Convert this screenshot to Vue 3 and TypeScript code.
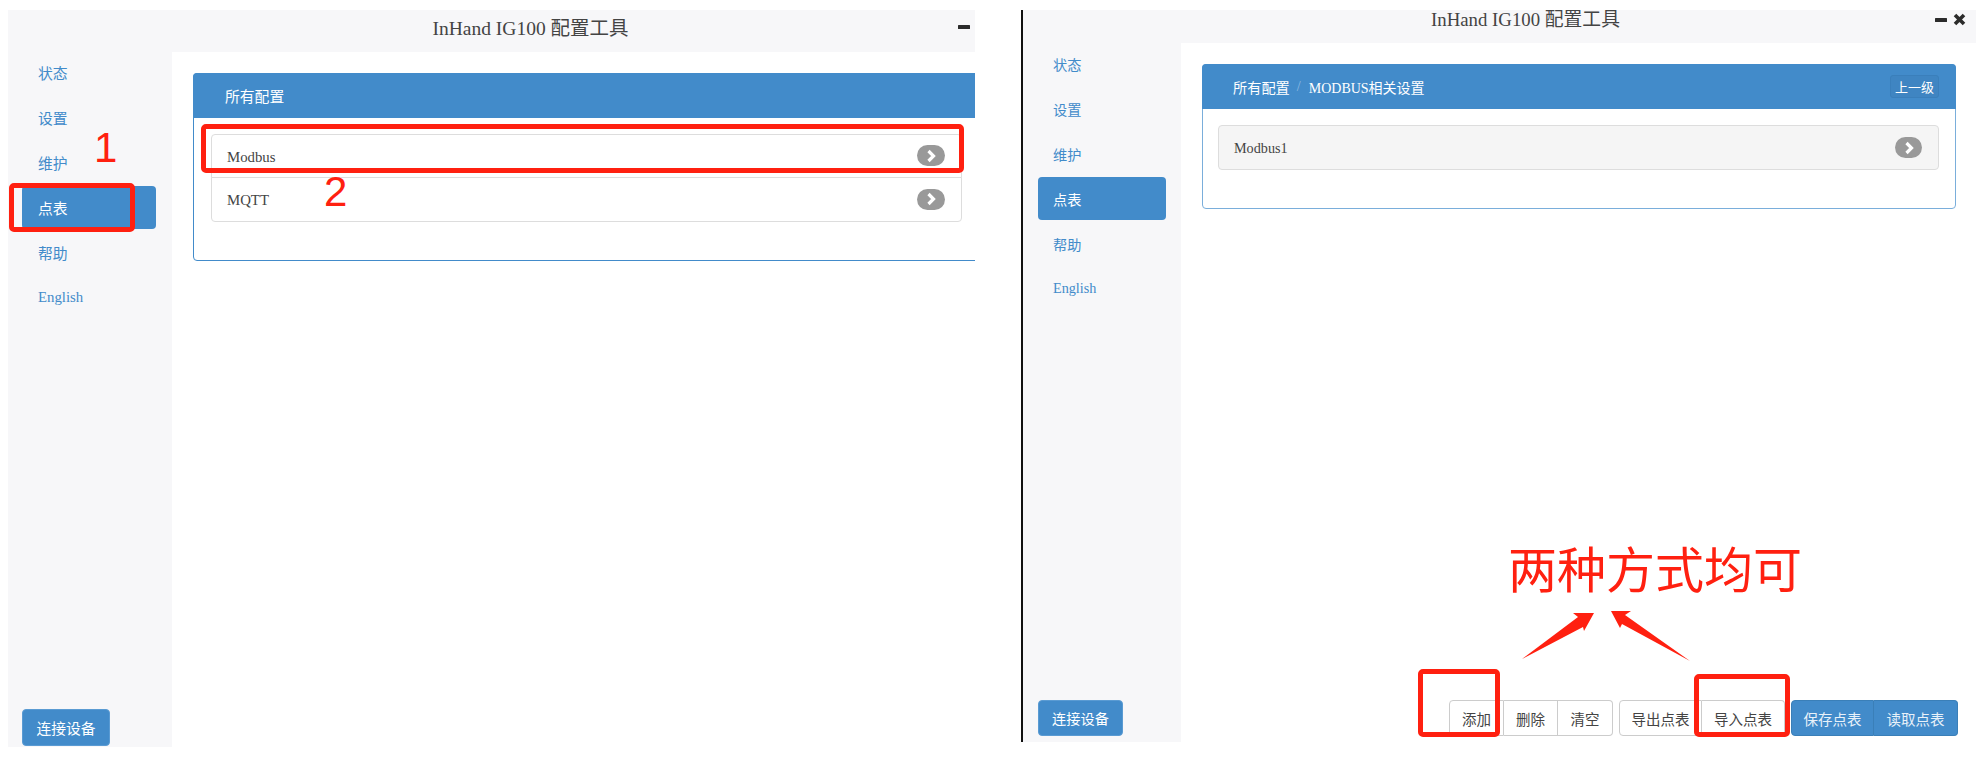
<script setup lang="ts">
interface Nav { label: string; active?: boolean }
const navs: Nav[] = [
  { label: '状态' },
  { label: '设置' },
  { label: '维护' },
  { label: '点表', active: true },
  { label: '帮助' },
  { label: 'English' },
]
const leftItems = ['Modbus', 'MQTT']
</script>

<template>
  <div class="page">
    <section class="win win-left">
      <header class="titlebar">
        <h1 class="title">InHand IG100 配置工具</h1>
        <div class="controls">
          <svg class="ctl-min" width="12" height="4" viewBox="0 0 12 4"><rect width="12" height="4" rx="0.5" fill="#2b2b2b" /></svg>
        </div>
      </header>
      <div class="body">
        <aside class="side">
          <nav class="nav">
            <a v-for="n in navs" :key="n.label" class="nav-item" :class="{ active: n.active }">{{ n.label }}</a>
          </nav>
          <button class="connect">连接设备</button>
        </aside>
        <main class="main">
          <div class="panel">
            <div class="panel-head"><span>所有配置</span></div>
            <div class="panel-body">
              <div class="list">
                <div v-for="t in leftItems" :key="t" class="list-item">
                  <span>{{ t }}</span>
                  <span class="badge">
                    <svg width="12" height="14" viewBox="0 0 12 14"><path d="M3.5 2 8.5 7 3.5 12" fill="none" stroke="#fff" stroke-width="3.2" /></svg>
                  </span>
                </div>
              </div>
            </div>
          </div>
        </main>
      </div>
    </section>

    <section class="win win-right">
      <header class="titlebar">
        <h1 class="title">InHand IG100 配置工具</h1>
        <div class="controls">
          <svg class="ctl-min" width="12" height="4" viewBox="0 0 12 4"><rect width="12" height="4" rx="0.5" fill="#2b2b2b" /></svg>
          <svg class="ctl-x" width="13" height="13" viewBox="0 0 13 13"><path d="M2 2 11 11M11 2 2 11" stroke="#2b2b2b" stroke-width="3.6" /></svg>
        </div>
      </header>
      <div class="body">
        <aside class="side">
          <nav class="nav">
            <a v-for="n in navs" :key="n.label" class="nav-item" :class="{ active: n.active }">{{ n.label }}</a>
          </nav>
          <button class="connect">连接设备</button>
        </aside>
        <main class="main">
          <div class="panel">
            <div class="panel-head">
              <span>所有配置</span><span class="sep">/</span><span class="crumb">MODBUS相关设置</span>
              <button class="up">上一级</button>
            </div>
            <div class="panel-body">
              <div class="list">
                <div class="list-item hover">
                  <span>Modbus1</span>
                  <span class="badge">
                    <svg width="12" height="14" viewBox="0 0 12 14"><path d="M3.5 2 8.5 7 3.5 12" fill="none" stroke="#fff" stroke-width="3.2" /></svg>
                  </span>
                </div>
              </div>
            </div>
          </div>
          <div class="footer">
            <div class="group">
              <button class="btn w55">添加</button><button class="btn w54">删除</button><button class="btn w55">清空</button>
            </div>
            <div class="group">
              <button class="btn w83">导出点表</button><button class="btn w83">导入点表</button>
            </div>
            <div class="group blue">
              <button class="btn w83">保存点表</button><button class="btn w84">读取点表</button>
            </div>
          </div>
        </main>
      </div>
    </section>

    <div class="mark m1"></div>
    <div class="mark m2"></div>
    <div class="mark m3"></div>
    <div class="mark m4"></div>
    <span class="num n1">1</span>
    <span class="num n2">2</span>
    <span class="note">两种方式均可</span>
    <svg class="arrows" width="1980" height="759" viewBox="0 0 1980 759">
      <polygon points="1522,659 1578,617 1573,613 1594,613 1584,631 1583,627" fill="#ff2010" />
      <polygon points="1690,661 1625,615 1631,611 1611,611 1620,628 1622,624" fill="#ff2010" />
    </svg>
  </div>
</template>

<style>
html, body { margin: 0; background: #fff; }
</style>

<style scoped>
.page {
  position: relative;
  width: 1980px;
  height: 759px;
  overflow: hidden;
  display: flex;
  align-items: flex-start;
  padding: 10px 0 0 8px;
  box-sizing: border-box;
  font-family: "Liberation Serif", "Noto Sans CJK SC", serif;
  color: #444;
}
.win { display: flex; flex-direction: column; background: #f7f7f9; flex: none; }
.win-left { width: 967px; height: 737px; font-size: 14.8px; }
.win-right { width: 953px; height: 732px; margin-left: 46px; border-left: 2px solid #111; font-size: 14.2px; }

.titlebar { display: flex; align-items: center; justify-content: center; position: relative; flex: none; }
.win-left .titlebar { height: 42px; padding: 0 0 4px 78px; box-sizing: border-box; }
.win-right .titlebar { height: 33px; padding: 0 0 14px 52px; box-sizing: border-box; }
.title { margin: 0; font-weight: 400; color: #444; line-height: 22px; }
.win-left .title { font-size: 19.5px; }
.win-right .title { font-size: 18.8px; }
.controls { position: absolute; display: flex; align-items: center; gap: 6px; }
.win-left .controls { right: 5px; top: 15px; }
.win-right .controls { right: 10px; top: 3px; }

.body { flex: 1; display: flex; min-height: 0; }
.side { flex: none; display: flex; flex-direction: column; justify-content: space-between; box-sizing: border-box; }
.win-left .side { width: 164px; padding: 0 16px 1px 14px; }
.win-right .side { width: 158px; padding: 0 15px 6px 15px; }
.nav { display: flex; flex-direction: column; gap: 2px; margin-top: -1px; }
.nav-item {
  height: 43px;
  display: flex;
  align-items: center;
  padding-left: 16px;
  border-radius: 4px;
  color: #428bca;
  box-sizing: border-box;
}
.win-right .nav-item { padding-left: 15px; }
.nav-item.active { background: #428bca; color: #fff; }
.connect {
  align-self: flex-start;
  background: #428bca;
  color: #fff;
  border: 1px solid #5a9bd3;
  border-radius: 4px;
  font: inherit;
  height: 37px;
  padding: 0;
}
.win-left .connect { width: 88px; }
.win-right .connect { width: 85px; height: 36px; }

.main { flex: 1; background: #fff; min-width: 0; overflow: hidden; display: flex; flex-direction: column; }
.win-left .main { padding: 21px 0 0 21px; }
.win-right .main { padding: 21px 20px 6px 21px; }
.panel { border: 1px solid #428bca; border-radius: 4px; background: #fff; flex: none; }
.win-left .panel { width: 820px; }
.win-right .panel { border-color: #7aaedb; }
.panel-head {
  background: #428bca;
  color: #fff;
  height: 45px;
  box-sizing: border-box;
  margin: -1px -1px 0;
  border-radius: 4px 4px 0 0;
  padding-left: 32px;
  display: flex;
  align-items: center;
}
.win-right .panel-head { padding-left: 31px; padding-right: 17px; }
.sep { color: #8fbce3; margin: 0 8px 0 7px; }
.crumb { font-size: 14px; }
.up {
  margin-left: auto;
  width: 49px;
  height: 23px;
  padding: 0;
  background: #3f85c2;
  color: #fff;
  border: 1px solid #3a7fbb;
  border-radius: 3px;
  font: inherit;
  font-size: 13px;
}
.panel-body { padding: 16px 0 38px 17px; }
.win-left .panel-body { padding-right: 52px; }
.win-right .panel-body { padding: 16px 16px 38px 15px; }
.list { display: flex; flex-direction: column; }
.list-item {
  height: 44px;
  display: flex;
  align-items: center;
  justify-content: space-between;
  box-sizing: border-box;
  padding: 2px 16px 0 15px;
  border: 1px solid #ddd;
}
.list-item + .list-item { margin-top: -1px; height: 45px; }
.list-item:first-child { border-radius: 4px 4px 0 0; }
.list-item:last-child { border-radius: 0 0 4px 4px; }
.list-item.hover { background: #f5f5f5; border-radius: 4px; height: 45px; padding: 2px 16px 0 15px; color: #444; }
.badge {
  width: 28px;
  height: 21px;
  border-radius: 10.5px;
  background: #999;
  display: flex;
  align-items: center;
  justify-content: center;
  margin-top: -3px;
}
.hover .badge { margin-top: -2px; width: 27px; }

.footer { margin-top: auto; margin-right: -2px; display: flex; justify-content: flex-end; gap: 6px; font-size: 14.5px; }
.group { display: flex; }
.btn {
  height: 36px;
  padding: 0;
  font: inherit;
  color: #444;
  background: #fff;
  border: 1px solid #ccc;
  border-left-width: 0;
  box-sizing: border-box;
}
.btn:first-child { border-left-width: 1px; border-radius: 4px 0 0 4px; }
.btn:last-child { border-radius: 0 4px 4px 0; }
.blue .btn { background: #428bca; color: #e8f1f9; border-color: #3a7fb8; }
.w54 { width: 54px; }
.w55 { width: 55px; }
.w83 { width: 83px; }
.w84 { width: 84px; }

.mark { position: absolute; border: 5px solid #ff2010; border-radius: 5px; box-sizing: border-box; }
.m1 { left: 9px; top: 183px; width: 126px; height: 49px; }
.m2 { left: 201px; top: 124px; width: 763px; height: 49px; }
.m3 { left: 1418px; top: 669px; width: 82px; height: 68px; }
.m4 { left: 1694px; top: 674px; width: 96px; height: 63px; }

.num { position: absolute; color: #ff2010; font-family: "Liberation Sans", sans-serif; font-size: 42px; line-height: 42px; }
.n1 { left: 94px; top: 127px; }
.n2 { left: 324px; top: 171px; }
.note {
  position: absolute;
  left: 1508px;
  top: 532px;
  font-family: "Noto Sans CJK SC", sans-serif;
  font-size: 49px;
  line-height: 70px;
  color: #ff2010;
  white-space: nowrap;
}
.arrows { position: absolute; left: 0; top: 0; pointer-events: none; }
</style>
